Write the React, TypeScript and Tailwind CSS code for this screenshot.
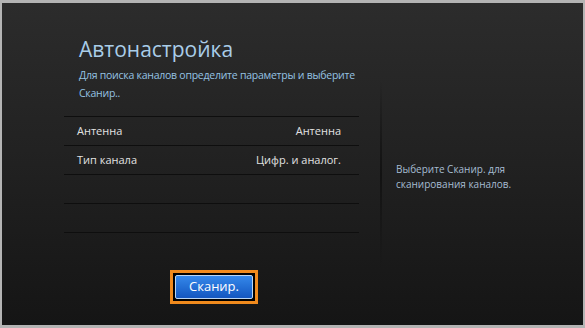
export default function App() {
  const rows = [
    { label: "Антенна", value: "Антенна" },
    { label: "Тип канала", value: "Цифр. и аналог." },
    { label: "", value: "" },
    { label: "", value: "" },
  ];

  return (
    <div className="h-[328px] w-[585px] overflow-hidden bg-[#b4b4b4] pt-[3px] pb-[3px] px-[2px] font-['Open_Sans',sans-serif]">
      <div className="flex h-full w-full bg-gradient-to-b from-[#2c2c2c] via-[#212121] to-[#151515]">
        {/* левая часть */}
        <div className="flex w-[378px] shrink-0 flex-col">
          <div className="pl-[77px] pt-[32px]">
            <h1 className="text-[21px] leading-[28px] text-[#a9cde8]">Автонастройка</h1>
            <p className="mt-[3px] w-[285px] text-[10.5px] leading-[18px] tracking-[-0.25px] text-[#95c2e2]">
              Для поиска каналов определите параметры и выберите Сканир..
            </p>
          </div>

          <div className="ml-[62px] mt-[14px] w-[295px] border-t border-[#0e0e0e]">
            {rows.map((row, index) => (
              <div
                key={index}
                className="flex h-[29px] items-center justify-between border-b border-[#0e0e0e] pl-[13px] pr-[18px] text-[11px] text-[#e2e2e2]"
              >
                <span>{row.label}</span>
                <span>{row.value}</span>
              </div>
            ))}
          </div>

          <div className="ml-[168px] mt-[37px] w-[88px] border-[3px] border-[#f08a1d] bg-black p-[2px]">
            <button
              type="button"
              className="flex h-[24px] w-full items-center justify-center rounded-[2px] border border-[#bcd6f2] bg-gradient-to-b from-[#3588ea] to-[#1456c0] text-[13px] text-white"
            >
              Сканир.
            </button>
          </div>
        </div>

        {/* разделитель */}
        <div className="mt-[77px] h-[190px] w-[2px] shrink-0 bg-gradient-to-b from-transparent via-[#121212] to-transparent" />

        {/* правая часть */}
        <div className="pl-[14px] pt-[159px]">
          <p className="w-[150px] text-[10px] leading-[15px] text-[#a6bdd2]">
            Выберите Сканир. для сканирования каналов.
          </p>
        </div>
      </div>
    </div>
  );
}
